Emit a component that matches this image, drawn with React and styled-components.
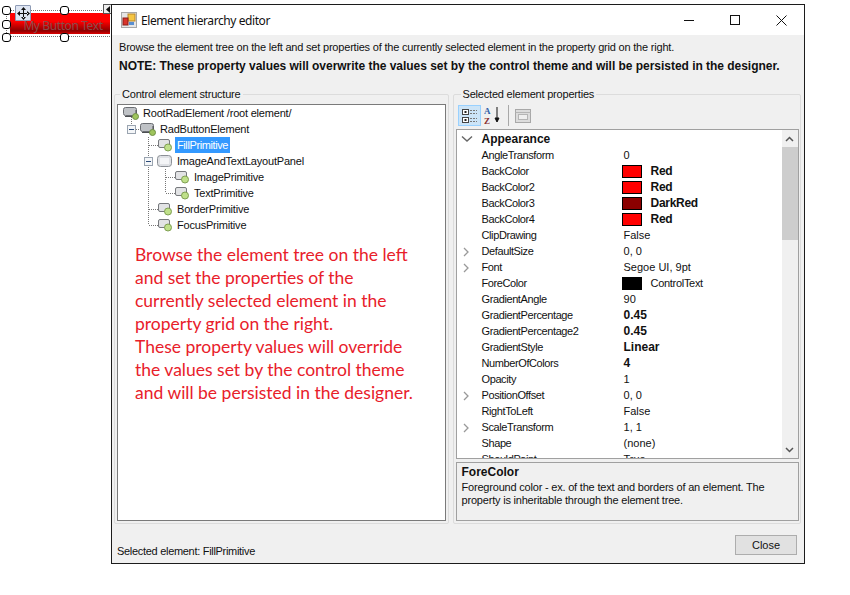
import React from 'react'
import styled, { createGlobalStyle } from 'styled-components'

const GlobalStyle = createGlobalStyle`
  html, body {
    margin: 0;
    padding: 0;
    background: #fff;
  }
`

const treeRows = [
  { label: 'RootRadElement /root element/', left: 5, gap: 2, tone: 'dark' },
  { label: 'RadButtonElement', left: 22, gap: 2, expander: true, tone: 'dark' },
  { label: 'FillPrimitive', left: 40, gap: 2, selected: true },
  { label: 'ImageAndTextLayoutPanel', left: 39, gap: 3, expander: true, panel: true },
  { label: 'ImagePrimitive', left: 57, gap: 2 },
  { label: 'TextPrimitive', left: 57, gap: 2 },
  { label: 'BorderPrimitive', left: 40, gap: 2 },
  { label: 'FocusPrimitive', left: 40, gap: 2 },
]

const properties = [
  { name: 'AngleTransform', value: '0' },
  { name: 'BackColor', value: 'Red', swatch: '#ff0000', bold: true },
  { name: 'BackColor2', value: 'Red', swatch: '#ff0000', bold: true },
  { name: 'BackColor3', value: 'DarkRed', swatch: '#8b0000', bold: true },
  { name: 'BackColor4', value: 'Red', swatch: '#ff0000', bold: true },
  { name: 'ClipDrawing', value: 'False' },
  { name: 'DefaultSize', value: '0, 0', more: true },
  { name: 'Font', value: 'Segoe UI, 9pt', more: true },
  { name: 'ForeColor', value: 'ControlText', swatch: '#000000' },
  { name: 'GradientAngle', value: '90' },
  { name: 'GradientPercentage', value: '0.45', bold: true },
  { name: 'GradientPercentage2', value: '0.45', bold: true },
  { name: 'GradientStyle', value: 'Linear', bold: true },
  { name: 'NumberOfColors', value: '4', bold: true },
  { name: 'Opacity', value: '1' },
  { name: 'PositionOffset', value: '0, 0', more: true },
  { name: 'RightToLeft', value: 'False' },
  { name: 'ScaleTransform', value: '1, 1', more: true },
  { name: 'Shape', value: '(none)' },
  { name: 'ShouldPaint', value: 'True' },
]

const AppIcon = () => (
  <svg width="16" height="16" viewBox="0 0 16 16">
    <rect x="0.5" y="0.5" width="15" height="15" fill="#e6e6e6" stroke="#a8a8a8" />
    <rect x="7" y="2" width="7" height="7" fill="#f6c644" stroke="#b8862a" />
    <rect x="2" y="6" width="5" height="7" fill="#d9342b" stroke="#8a1f1a" />
    <rect x="8" y="10" width="5" height="3" fill="#5a8fd0" />
  </svg>
)

const NodeIcon = ({ panel, tone }) =>
  panel ? (
    <svg width="15" height="12" viewBox="0 0 15 12">
      <rect x="0.5" y="0.5" width="14" height="11" rx="3" fill="#dfe1e5" stroke="#8c9096" />
      <rect x="3" y="3" width="9" height="6" fill="#f4f5f7" />
    </svg>
  ) : tone === 'dark' ? (
    <svg width="16" height="13" viewBox="0 0 16 13">
      <rect x="0.5" y="0.5" width="13" height="8" rx="2" fill="#bfc2c6" stroke="#6a6d72" />
      <path d="M2 9.5 H13 V3" stroke="#4c4e52" fill="none" />
      <circle cx="12.5" cy="9.5" r="3" fill="#9ec45c" stroke="#6f8f45" />
    </svg>
  ) : (
    <svg width="15" height="13" viewBox="0 0 15 13">
      <rect x="0.5" y="0.5" width="11" height="8" rx="1.5" fill="#e2e3e5" stroke="#77797d" />
      <circle cx="10" cy="8.5" r="3.5" fill="#bfe08a" stroke="#7f9f52" />
    </svg>
  )

const Window = styled.div`
  position: absolute;
  left: 111px;
  top: 4px;
  width: 692px;
  height: 558px;
  display: flex;
  flex-direction: column;
  background: #f0f0f0;
  border: 1px solid #1c1c1c;
  font-family: "Liberation Sans", Arial, sans-serif;
  font-size: 11px;
  letter-spacing: -0.2px;
  color: #111;
`

const TitleBar = styled.div`
  height: 30px;
  flex: none;
  display: flex;
  align-items: center;
  background: #fff;
  padding-left: 9px;
`

const Title = styled.div`
  flex: 1;
  margin-left: 4px;
  font-family: "Noto Sans", sans-serif;
  font-size: 12px;
  letter-spacing: -0.42px;
`

const CaptionButton = styled.div`
  width: 46px;
  height: 30px;
  display: flex;
  align-items: center;
  justify-content: center;
`

const Body = styled.div`
  flex: 1;
  display: flex;
  flex-direction: column;
  padding: 4px 3px 0 7px;
  min-height: 0;
`

const Intro = styled.div`
  line-height: 16px;
  height: 49px;
  flex: none;
`

const Note = styled.div`
  font-weight: 700;
  margin-top: 3px;
  font-size: 12px;
  letter-spacing: -0.03px;
`

const Panels = styled.div`
  display: flex;
  gap: 4px;
  height: 436px;
  flex: none;
  margin-left: -5px;
`

const Group = styled.fieldset`
  margin: 0;
  padding: 0 2px;
  border: 1px solid #dcdcdc;
  border-radius: 2px;
  width: ${p => p.$width}px;
  box-sizing: border-box;
  min-width: 0;
  display: flex;
  flex-direction: column;
`

const Legend = styled.legend`
  padding: 0 2px;
  margin-left: ${p => p.$inset}px;
  line-height: 12px;
`

const TreeBox = styled.div`
  position: relative;
  flex: none;
  height: 417px;
  margin-top: 4px;
  background: #fff;
  border: 1px solid #7a7a7a;
  box-sizing: border-box;
`

const TreeLines = styled.svg`
  position: absolute;
  left: 0;
  top: 0;
`

const TreeRow = styled.div`
  position: relative;
  height: 16px;
  display: flex;
  align-items: center;
  padding-left: ${p => p.$left}px;
`

const Expander = styled.span`
  position: absolute;
  left: ${p => p.$left - 13}px;
  top: 4px;
  width: 7px;
  height: 7px;
  border: 1px solid #9aa4b0;
  background: #f4f6f8;
  &::after {
    content: '';
    position: absolute;
    left: 1px;
    top: 3px;
    width: 5px;
    height: 1px;
    background: #2b4a78;
  }
`

const TreeLabel = styled.span`
  margin-left: ${p => p.$gap}px;
  padding: 0 2px;
  line-height: 16px;
  letter-spacing: ${p => (p.$selected ? -0.4 : -0.2)}px;
  background: ${p => (p.$selected ? '#3399ff' : 'transparent')};
  color: ${p => (p.$selected ? '#fff' : '#111')};
`

const RedNote = styled.div`
  margin: 10px 0 0 17px;
  font-family: Lato, sans-serif;
  font-size: 17.5px;
  line-height: 23px;
  letter-spacing: 0;
  color: #e8202a;
  white-space: pre-line;
`

const Toolbar = styled.div`
  height: 21px;
  margin: 5px 0 0 2px;
  display: flex;
  align-items: center;
  gap: 1px;
`

const ToolButton = styled.div`
  width: 23px;
  height: 21px;
  box-sizing: border-box;
  display: flex;
  align-items: center;
  justify-content: center;
  background: ${p => (p.$active ? '#cce4f7' : 'transparent')};
  border: 1px solid ${p => (p.$active ? '#99d1ff' : 'transparent')};
`

const ToolSeparator = styled.div`
  width: 1px;
  height: 21px;
  background: #a8a8a8;
  margin: 0 2px;
`

const Grid = styled.div`
  position: relative;
  height: 330px;
  margin-top: 3px;
  width: 343px;
  padding-top: 1px;
  box-sizing: border-box;
  background: #fff;
  border: 1px solid #a0a0a0;
  overflow: hidden;
`

const PropRow = styled.div`
  position: relative;
  height: 16px;
  display: grid;
  grid-template-columns: 142px 1fr;
  align-items: center;
  padding-left: 25px;
  font-weight: ${p => (p.$header ? 700 : 400)};
  font-size: ${p => (p.$header ? 12 : 11)}px;
  letter-spacing: ${p => (p.$header ? 0 : -0.4)}px;
`

const Chevron = styled.svg`
  position: absolute;
  left: 4px;
  top: 4px;
`

const Value = styled.div`
  display: flex;
  align-items: center;
  gap: 9px;
  font-weight: ${p => (p.$bold ? 700 : 400)};
  font-size: ${p => (p.$bold ? 12 : 11)}px;
  letter-spacing: ${p => (p.$swatch ? -0.3 : 0)}px;
  margin-left: ${p => (p.$swatch ? -2 : 0)}px;
`

const Swatch = styled.span`
  width: 20px;
  height: 13px;
  box-sizing: border-box;
  background: ${p => p.$color};
  border: 1px solid #000;
`

const Scrollbar = styled.div`
  position: absolute;
  right: 0;
  top: 0;
  bottom: 0;
  width: 16px;
  background: #f0f0f0;
  display: flex;
  flex-direction: column;
`

const ScrollArrow = styled.div`
  height: 17px;
  flex: none;
  display: flex;
  align-items: center;
  justify-content: center;
`

const ScrollTrack = styled.div`
  flex: 1;
`

const ScrollThumb = styled.div`
  height: 93px;
  background: #cdcdcd;
`

const Description = styled.div`
  height: 59px;
  width: 343px;
  margin-top: 3px;
  box-sizing: border-box;
  border: 1px solid #a0a0a0;
  padding: 3px 5px;
  line-height: 13px;
`

const DescriptionTitle = styled.div`
  font-weight: 700;
  font-size: 12px;
  letter-spacing: 0;
  margin-bottom: 2px;
`

const Footer = styled.div`
  flex: 1;
  display: flex;
  align-items: flex-start;
  justify-content: space-between;
  margin-left: -2px;
`

const Status = styled.div`
  margin-top: 21px;
  letter-spacing: -0.3px;
`

const CloseButton = styled.button`
  width: 62px;
  height: 20px;
  margin: 11px 4px 0 0;
  padding: 0;
  border: 1px solid #adadad;
  background: #e1e1e1;
  font: inherit;
  letter-spacing: 0;
  color: #111;
`

const Designer = styled.div`
  position: absolute;
  left: 10px;
  top: 13px;
  width: 100px;
  height: 21px;
  display: flex;
  align-items: center;
  justify-content: center;
  padding: 3px 0 0 6px;
  box-sizing: border-box;
  background: linear-gradient(180deg, #ff0000 0%, #ff0000 40%, #8b0000 85%, #e00000 100%);
  font-family: "Noto Sans", sans-serif;
  font-size: 12px;
  letter-spacing: -0.4px;
  color: #8a4b4b;
`

const Frame = styled.div`
  position: absolute;
  left: 6px;
  top: 10px;
  width: 110px;
  height: 27px;
  border: 1px dotted #777;
  box-sizing: border-box;
`

const Handle = styled.span`
  position: absolute;
  left: ${p => p.$x}px;
  top: ${p => p.$y}px;
  width: 7px;
  height: 7px;
  border: 1px solid #000;
  border-radius: 3px;
  background: #fff;
`

const MoveGlyph = styled.div`
  position: absolute;
  left: 15px;
  top: 5px;
  width: 14px;
  height: 14px;
  background: #dfe6f3;
  border: 1px solid #8e9bb5;
  border-radius: 1px;
  display: flex;
  align-items: center;
  justify-content: center;
`

const SmartTag = styled.div`
  position: absolute;
  left: 103px;
  top: 4px;
  width: 7px;
  height: 8px;
  background: #eee;
  border: 1px solid #555;
  display: flex;
  align-items: center;
  justify-content: center;
`

export default function App() {
  return (
    <>
      <GlobalStyle />
      <Designer>My Button Text</Designer>
      <Frame />
      <Handle $x={2} $y={6} />
      <Handle $x={60} $y={6} />
      <Handle $x={2} $y={20} />
      <Handle $x={2} $y={33} />
      <Handle $x={60} $y={33} />
      <MoveGlyph>
        <svg width="13" height="13" viewBox="0 0 13 13">
          <path d="M6.5 0 L9 3 H4 Z M6.5 13 L9 10 H4 Z M0 6.5 L3 4 V9 Z M13 6.5 L10 4 V9 Z M6 2 h1 v9 h-1 Z M2 6 h9 v1 h-9 Z" fill="#111" />
        </svg>
      </MoveGlyph>
      <SmartTag>
        <svg width="6" height="7" viewBox="0 0 6 7"><path d="M5 0 V7 L1 3.5 Z" fill="#111" /></svg>
      </SmartTag>
      <Window>
        <TitleBar>
          <AppIcon />
          <Title>Element hierarchy editor</Title>
          <CaptionButton>
            <svg width="10" height="10"><path d="M0 5.5 H10" stroke="#111" /></svg>
          </CaptionButton>
          <CaptionButton>
            <svg width="10" height="10"><rect x="0.5" y="0.5" width="9" height="9" fill="none" stroke="#111" /></svg>
          </CaptionButton>
          <CaptionButton>
            <svg width="11" height="11"><path d="M0.5 0.5 L10.5 10.5 M10.5 0.5 L0.5 10.5" stroke="#111" /></svg>
          </CaptionButton>
        </TitleBar>
        <Body>
          <Intro>
            <div>Browse the element tree on the left and set properties of the currently selected element in the property grid on the right.</div>
            <Note>NOTE: These property values will overwrite the values set by the control theme and will be persisted in the designer.</Note>
          </Intro>
          <Panels>
            <Group $width={336}>
              <Legend $inset={3}>Control element structure</Legend>
              <TreeBox>
                <TreeLines width="329" height="130">
                  <path
                    d="M13.5 8 V20 M18 24.5 H23 M30.5 32 V120 M31 40.5 H41 M31 104.5 H41 M31 120.5 H41 M47.5 64 V88 M48 72.5 H58 M48 88.5 H58"
                    stroke="#777"
                    strokeDasharray="1 1"
                    fill="none"
                  />
                </TreeLines>
                {treeRows.map(row => (
                  <TreeRow key={row.label} $left={row.left}>
                    {row.expander && <Expander $left={row.left} />}
                    <NodeIcon panel={row.panel} tone={row.tone} />
                    <TreeLabel $gap={row.gap} $selected={row.selected}>
                      {row.label}
                    </TreeLabel>
                  </TreeRow>
                ))}
                <RedNote>
                  {`Browse the element tree on the left
and set the properties of the
currently selected element in the
property grid on the right.
These property values will override
the values set by the control theme
and will be persisted in the designer.`}
                </RedNote>
              </TreeBox>
            </Group>
            <Group $width={350}>
              <Legend $inset={5}>Selected element properties</Legend>
              <Toolbar>
                <ToolButton $active>
                  <svg width="17" height="16" viewBox="0 0 17 16">
                    <rect x="1.5" y="1.5" width="6" height="5" fill="#fff" stroke="#444" />
                    <rect x="1.5" y="9.5" width="6" height="5" fill="#fff" stroke="#444" />
                    <path d="M3 4 H6 M4.5 3 V5 M3 12 H6 M4.5 11 V13" stroke="#222" />
                    <path d="M9 2.5 H16 M9 5.5 H16 M9 10.5 H16 M9 13.5 H16" stroke="#777" strokeDasharray="2 1" />
                  </svg>
                </ToolButton>
                <ToolButton>
                  <svg width="18" height="19" viewBox="0 0 18 19">
                    <text x="0" y="8" fontFamily="Liberation Serif" fontSize="9" fontWeight="700" fill="#2f5fa8">A</text>
                    <text x="0" y="18" fontFamily="Liberation Serif" fontSize="9" fontWeight="700" fill="#8a2f2f">Z</text>
                    <path d="M13 1 V15 M11 12 L13 16 L15 12 Z" stroke="#111" fill="#111" />
                  </svg>
                </ToolButton>
                <ToolSeparator />
                <ToolButton>
                  <svg width="16" height="14" viewBox="0 0 16 14">
                    <rect x="0.5" y="0.5" width="15" height="13" fill="#dcdcdc" stroke="#a8a8a8" />
                    <path d="M0.5 3.5 H15.5" stroke="#b5b5b5" />
                    <rect x="3.5" y="5.5" width="9" height="5" fill="#efefef" stroke="#b5b5b5" />
                  </svg>
                </ToolButton>
              </Toolbar>
              <Grid>
                <PropRow $header>
                  <Chevron width="12" height="8" viewBox="0 0 12 8">
                    <path d="M1 1.5 L6 6 L11 1.5" stroke="#666" strokeWidth="1.4" fill="none" />
                  </Chevron>
                  Appearance
                </PropRow>
                {properties.map(prop => (
                  <PropRow key={prop.name}>
                    {prop.more && (
                      <Chevron width="10" height="10" viewBox="0 0 10 10">
                        <path d="M3 1 L7 5 L3 9" stroke="#999" strokeWidth="1.3" fill="none" />
                      </Chevron>
                    )}
                    <span>{prop.name}</span>
                    <Value $bold={prop.bold} $swatch={prop.swatch}>
                      {prop.swatch && <Swatch $color={prop.swatch} />}
                      {prop.value}
                    </Value>
                  </PropRow>
                ))}
                <Scrollbar>
                  <ScrollArrow>
                    <svg width="9" height="6" viewBox="0 0 9 6"><path d="M1 5 L4.5 1.5 L8 5" stroke="#555" strokeWidth="1.5" fill="none" /></svg>
                  </ScrollArrow>
                  <ScrollTrack><ScrollThumb /></ScrollTrack>
                  <ScrollArrow>
                    <svg width="9" height="6" viewBox="0 0 9 6"><path d="M1 1 L4.5 4.5 L8 1" stroke="#555" strokeWidth="1.5" fill="none" /></svg>
                  </ScrollArrow>
                </Scrollbar>
              </Grid>
              <Description>
                <DescriptionTitle>ForeColor</DescriptionTitle>
                Foreground color - ex. of the text and borders of an element. The property is inheritable through the element tree.
              </Description>
            </Group>
          </Panels>
          <Footer>
            <Status>Selected element: FillPrimitive</Status>
            <CloseButton>Close</CloseButton>
          </Footer>
        </Body>
      </Window>
    </>
  )
}
